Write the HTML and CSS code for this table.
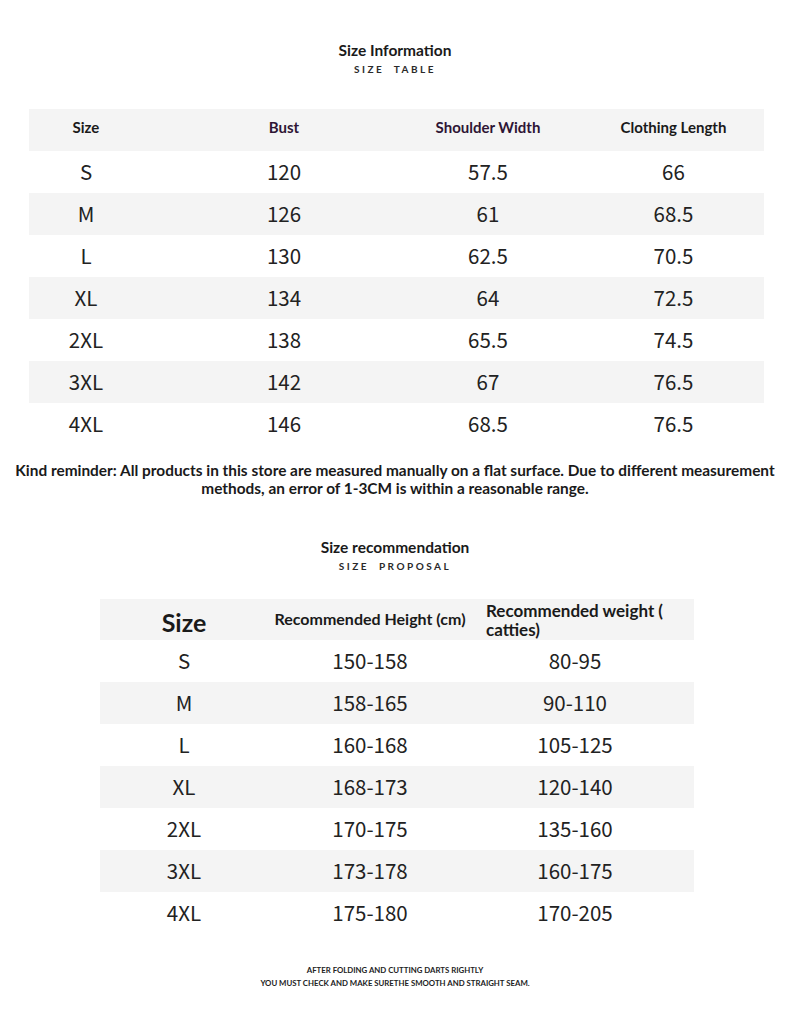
FILE: index.html
```html
<!DOCTYPE html>
<html>
<head>
<meta charset="utf-8">
<link rel="stylesheet" href="styles.css">
</head>
<body>
<div class="page">
  <div class="title">Size Information</div>
  <div class="subtitle">SIZE&nbsp;&nbsp;TABLE</div>

  <div class="table t1">
    <div class="row head">
      <div class="c c1">Size</div>
      <div class="c c2 purple">Bust</div>
      <div class="c c3 purple">Shoulder Width</div>
      <div class="c c4">Clothing Length</div>
    </div>
    <div class="row"><div class="c c1">S</div><div class="c c2">120</div><div class="c c3">57.5</div><div class="c c4">66</div></div>
    <div class="row alt"><div class="c c1">M</div><div class="c c2">126</div><div class="c c3">61</div><div class="c c4">68.5</div></div>
    <div class="row"><div class="c c1">L</div><div class="c c2">130</div><div class="c c3">62.5</div><div class="c c4">70.5</div></div>
    <div class="row alt"><div class="c c1">XL</div><div class="c c2">134</div><div class="c c3">64</div><div class="c c4">72.5</div></div>
    <div class="row"><div class="c c1">2XL</div><div class="c c2">138</div><div class="c c3">65.5</div><div class="c c4">74.5</div></div>
    <div class="row alt"><div class="c c1">3XL</div><div class="c c2">142</div><div class="c c3">67</div><div class="c c4">76.5</div></div>
    <div class="row"><div class="c c1">4XL</div><div class="c c2">146</div><div class="c c3">68.5</div><div class="c c4">76.5</div></div>
  </div>

  <p class="note">Kind reminder: All products in this store are measured manually on a flat surface. Due to different measurement<br>methods, an error of 1-3CM is within a reasonable range.</p>

  <div class="title title2">Size recommendation</div>
  <div class="subtitle">SIZE&nbsp;&nbsp;PROPOSAL</div>

  <div class="table t2">
    <div class="row head">
      <div class="c d1 bigsize">Size</div>
      <div class="c d2 small">Recommended Height (cm)</div>
      <div class="c d3 wtitle">Recommended weight ( catties)</div>
    </div>
    <div class="row"><div class="c d1">S</div><div class="c d2">150-158</div><div class="c d3">80-95</div></div>
    <div class="row alt"><div class="c d1">M</div><div class="c d2">158-165</div><div class="c d3">90-110</div></div>
    <div class="row"><div class="c d1">L</div><div class="c d2">160-168</div><div class="c d3">105-125</div></div>
    <div class="row alt"><div class="c d1">XL</div><div class="c d2">168-173</div><div class="c d3">120-140</div></div>
    <div class="row"><div class="c d1">2XL</div><div class="c d2">170-175</div><div class="c d3">135-160</div></div>
    <div class="row alt"><div class="c d1">3XL</div><div class="c d2">173-178</div><div class="c d3">160-175</div></div>
    <div class="row"><div class="c d1">4XL</div><div class="c d2">175-180</div><div class="c d3">170-205</div></div>
  </div>

  <div class="footer">
    <div>AFTER FOLDING AND CUTTING DARTS RIGHTLY</div>
    <div>YOU MUST CHECK AND MAKE SURETHE SMOOTH AND STRAIGHT SEAM.</div>
  </div>
</div>
</body>
</html>
```

FILE: styles.css
```css
html, body {
  margin: 0;
  padding: 0;
  background: #ffffff;
}

.page {
  width: 790px;
  padding-top: 41px;
  font-family: Lato, "Noto Sans", sans-serif;
  color: #1a1a1a;
}

.title {
  text-align: center;
  font-weight: 700;
  font-size: 15.5px;
  line-height: 18px;
  color: #1a1a1a;
}

.title2 {
  margin-top: 41px;
}

.subtitle {
  text-align: center;
  font-weight: 700;
  font-size: 10px;
  line-height: 14px;
  letter-spacing: 2.5px;
  margin-top: 3px;
  color: #2a2a2a;
}

.table {
  display: flex;
  flex-direction: column;
}

.t1 {
  width: 735px;
  margin: 33px 0 0 29px;
}

.t2 {
  width: 594px;
  margin: 26px 0 0 100px;
}

.row {
  display: grid;
  height: 42px;
  align-items: center;
  background: #ffffff;
}

.t1 .row {
  grid-template-columns: 114px 282px 126px 213px;
}

.t2 .row {
  grid-template-columns: 168px 204px 222px;
}

.t2 .row.head {
  height: 41px;
}

.row.alt,
.row.head {
  background: #f4f4f4;
}

.c {
  text-align: center;
  font-family: "Noto Sans CJK SC", "Noto Sans", sans-serif;
  font-size: 20.5px;
  font-weight: 400;
  color: #222;
  line-height: 24px;
  padding-bottom: 2px;
}

.head .c {
  font-family: Lato, "Noto Sans", sans-serif;
  font-weight: 700;
  font-size: 15px;
  color: #1a1a1a;
}

.t1 .head .c {
  padding-bottom: 6px;
}

.c4 {
  padding-left: 32px;
}

.purple,
.head .purple {
  color: #2e1535;
}

.d3 {
  padding: 0 30px 2px 14px;
}

.head .bigsize {
  font-size: 25px;
  line-height: 28px;
  padding-top: 4px;
  padding-bottom: 0;
}

.head .small {
  font-size: 16px;
}

.head .wtitle {
  font-size: 17px;
  line-height: 19px;
  text-align: left;
  padding: 0 10px 0 14px;
}

.note {
  margin: 16px 0 0 0;
  text-align: center;
  font-weight: 700;
  font-size: 15.4px;
  line-height: 18px;
  color: #1a1a1a;
  white-space: nowrap;
}

.footer {
  margin-top: 30px;
  text-align: center;
  font-weight: 700;
  font-size: 7.8px;
  line-height: 13px;
  color: #222;
  padding-bottom: 20px;
}
```
